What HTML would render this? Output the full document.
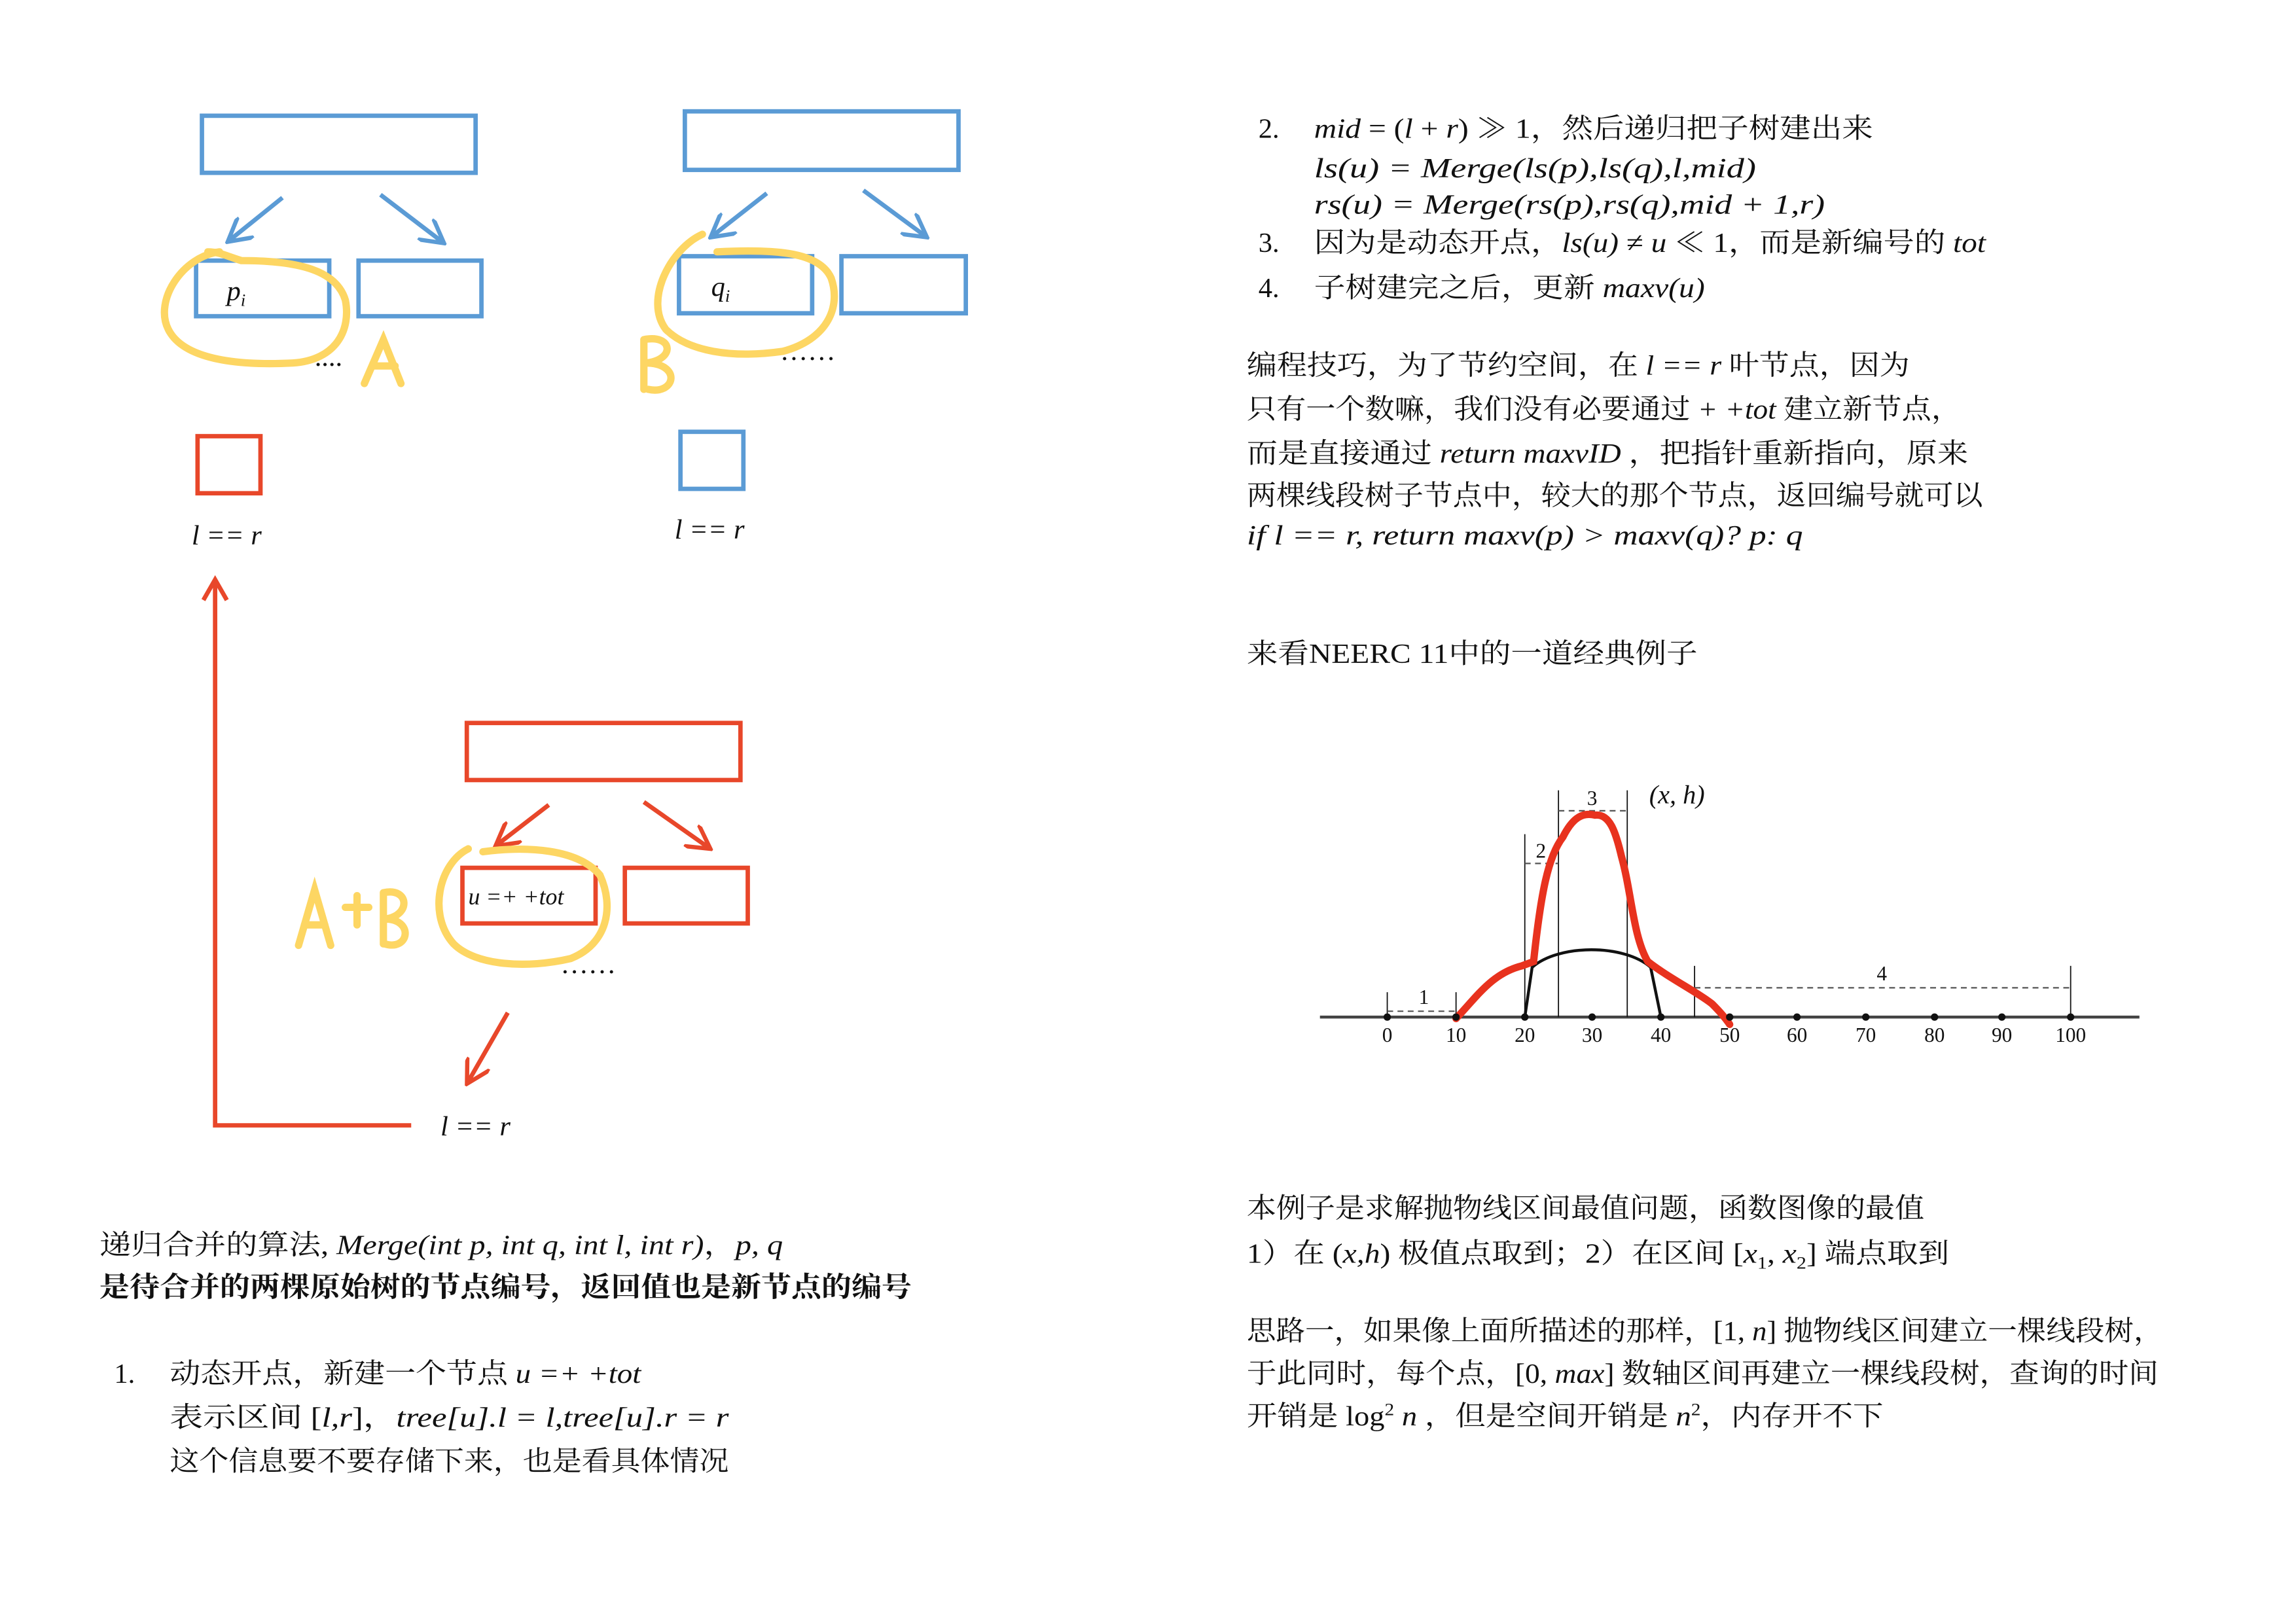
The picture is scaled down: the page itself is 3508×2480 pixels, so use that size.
<!DOCTYPE html>
<html><head><meta charset="utf-8">
<style>
html,body{margin:0;padding:0;background:#fff;}
svg{display:block;}
text{font-family:"Liberation Serif","Noto Serif CJK SC",serif;fill:#111;}
.t{font-size:19px;}
.i{font-style:italic;font-weight:normal;}
.b{font-weight:bold;}
</style></head>
<body>
<svg width="3508" height="2480" viewBox="0 0 1569 1109" xmlns="http://www.w3.org/2000/svg">
<rect width="1569" height="1109" fill="#fff"/>
<defs>
<marker id="ab" viewBox="0 0 10 10" refX="8" refY="5" markerWidth="6" markerHeight="6" orient="auto"><path d="M0,0 L9,5 L0,10" fill="none" stroke="#5b9bd5" stroke-width="1.6"/></marker>
<marker id="ar" viewBox="0 0 10 10" refX="8" refY="5" markerWidth="6" markerHeight="6" orient="auto"><path d="M0,0 L9,5 L0,10" fill="none" stroke="#e8472a" stroke-width="1.6"/></marker>
</defs>
<g fill="none" stroke="#5b9bd5" stroke-width="3">
<rect x="138" y="79" width="187" height="39"/>
<rect x="134" y="178" width="91" height="38"/>
<rect x="245" y="178" width="84" height="38"/>
<line x1="193" y1="135" x2="157" y2="164" marker-end="url(#ab)"/>
<line x1="260" y1="133" x2="302" y2="165" marker-end="url(#ab)"/>
<rect x="468" y="76" width="187" height="40"/>
<rect x="464" y="175" width="91" height="39"/>
<rect x="575" y="175" width="85" height="39"/>
<line x1="524" y1="132" x2="487" y2="161" marker-end="url(#ab)"/>
<line x1="590" y1="130" x2="632" y2="161" marker-end="url(#ab)"/>
<rect x="465" y="295" width="43" height="39"/>
</g>
<g fill="none" stroke="#e8472a" stroke-width="3">
<rect x="135" y="298" width="43" height="39"/>
<rect x="319" y="494" width="187" height="39"/>
<rect x="316" y="593" width="91" height="38"/>
<rect x="427" y="593" width="84" height="38"/>
<line x1="375" y1="550" x2="340" y2="577" marker-end="url(#ar)"/>
<line x1="440" y1="548" x2="484" y2="579" marker-end="url(#ar)"/>
<line x1="347" y1="692" x2="320" y2="739" marker-end="url(#ar)"/>
<polyline points="281,769 147,769 147,398"/>
<polyline points="139,410 147,396 155,410"/>
</g>
<g fill="none" stroke="#fdd663" stroke-width="5" stroke-linecap="round">
<path d="M150,172 C125,175 105,205 115,225 C125,245 160,250 200,248 C230,246 240,225 236,205 C230,185 205,178 165,178 C155,175 150,172 142,172"/>
<path d="M480,160 C458,170 440,205 455,225 C470,240 500,245 535,240 C565,232 575,210 568,190 C560,172 530,170 490,172"/>
<path d="M320,580 C300,590 292,625 310,645 C325,660 360,662 390,655 C415,645 420,620 410,598 C395,580 360,578 330,582"/>
<path d="M249,262 L262,232 L274,262 M255,250 L270,250"/>
<path d="M440,232 L440,266 M440,232 C460,228 462,246 441,248 C466,248 462,270 443,266"/>
<path d="M204,646 L215,608 L226,646 M208,632 L222,632 M236,620 L252,620 M244,612 L244,632 M262,610 L262,645 M262,610 C280,606 281,626 263,628 C283,628 280,650 263,645"/>
</g>
<text x="155" y="205" class="t i">p<tspan font-size="12" dy="4">i</tspan></text>
<text x="486" y="202" class="t i">q<tspan font-size="12" dy="4">i</tspan></text>
<text x="215" y="250" class="t">....</text>
<text x="533" y="246" class="t">……</text>
<text x="383" y="665" class="t">……</text>
<text x="320" y="618" font-size="16" class="i">u =+ +tot</text>
<text x="131" y="372" class="t i">l == r</text>
<text x="461" y="368" class="t i">l == r</text>
<text x="301" y="776" class="t i">l == r</text>

<text x="68" y="857" class="t" textLength="467" lengthAdjust="spacingAndGlyphs">递归合并的算法, <tspan class="i">Merge(int p, int q, int l, int r)</tspan>，<tspan class="i">p, q</tspan></text>
<text x="68" y="886" class="t b" textLength="555" lengthAdjust="spacingAndGlyphs">是待合并的两棵原始树的节点编号，返回值也是新节点的编号</text>
<text x="78" y="945" class="t">1.</text>
<text x="116" y="945" class="t" textLength="322" lengthAdjust="spacingAndGlyphs">动态开点，新建一个节点 <tspan class="i">u =+ +tot</tspan></text>
<text x="116" y="975" class="t" textLength="382" lengthAdjust="spacingAndGlyphs">表示区间 [<tspan class="i">l,r</tspan>]，<tspan class="i">tree[u].l = l,tree[u].r = r</tspan></text>
<text x="116" y="1005" class="t" textLength="382" lengthAdjust="spacingAndGlyphs">这个信息要不要存储下来，也是看具体情况</text>

<text x="860" y="94" class="t">2.</text>
<text x="898" y="94" class="t" textLength="382" lengthAdjust="spacingAndGlyphs"><tspan class="i">mid</tspan> = (<tspan class="i">l</tspan> + <tspan class="i">r</tspan>) ≫ 1，然后递归把子树建出来</text>
<text x="898" y="121" class="t i" textLength="302" lengthAdjust="spacingAndGlyphs">ls(u) = Merge(ls(p),ls(q),l,mid)</text>
<text x="898" y="146" class="t i" textLength="349" lengthAdjust="spacingAndGlyphs">rs(u) = Merge(rs(p),rs(q),mid + 1,r)</text>
<text x="860" y="172" class="t">3.</text>
<text x="898" y="172" class="t" textLength="459" lengthAdjust="spacingAndGlyphs">因为是动态开点，<tspan class="i">ls(u)</tspan> ≠ <tspan class="i">u</tspan> ≪ 1，而是新编号的 <tspan class="i">tot</tspan></text>
<text x="860" y="203" class="t">4.</text>
<text x="898" y="203" class="t" textLength="267" lengthAdjust="spacingAndGlyphs">子树建完之后，更新 <tspan class="i">maxv(u)</tspan></text>

<text x="852" y="256" class="t" textLength="453" lengthAdjust="spacingAndGlyphs">编程技巧，为了节约空间，在 <tspan class="i">l == r</tspan> 叶节点，因为</text>
<text x="852" y="286" class="t" textLength="488" lengthAdjust="spacingAndGlyphs">只有一个数嘛，我们没有必要通过 <tspan class="i">+ +tot</tspan> 建立新节点，</text>
<text x="852" y="316" class="t" textLength="493" lengthAdjust="spacingAndGlyphs">而是直接通过 <tspan class="i">return maxvID</tspan> ，把指针重新指向，原来</text>
<text x="852" y="345" class="t" textLength="503" lengthAdjust="spacingAndGlyphs">两棵线段树子节点中，较大的那个节点，返回编号就可以</text>
<text x="852" y="372" class="t i" textLength="380" lengthAdjust="spacingAndGlyphs">if l == r, return maxv(p) &gt; maxv(q)? p: q</text>
<text x="852" y="453" class="t" textLength="308" lengthAdjust="spacingAndGlyphs">来看NEERC 11中的一道经典例子</text>

<g stroke="#111" fill="none">
<line x1="902" y1="695" x2="1462" y2="695" stroke-width="2" stroke="#444"/>
<g stroke-width="0.8">
<line x1="948" y1="678" x2="948" y2="695"/>
<line x1="995" y1="678" x2="995" y2="695"/>
<line x1="1042" y1="570" x2="1042" y2="695"/>
<line x1="1065" y1="540" x2="1065" y2="695"/>
<line x1="1112" y1="540" x2="1112" y2="695"/>
<line x1="1158" y1="660" x2="1158" y2="695"/>
<line x1="1415" y1="660" x2="1415" y2="695"/>
</g>
<g stroke-width="1" stroke-dasharray="4,3" stroke="#555">
<line x1="948" y1="691" x2="995" y2="691"/>
<line x1="1042" y1="590" x2="1065" y2="590"/>
<line x1="1065" y1="554" x2="1112" y2="554"/>
<line x1="1158" y1="675" x2="1415" y2="675"/>
</g>
<path d="M1042,695 L1047,661 C1065,645 1110,645 1128,661 L1135,695" stroke-width="2"/>
<path d="M995,696 C1010,680 1020,665 1040,660 L1048,657 C1053,610 1058,585 1068,572 C1075,558 1082,555 1090,557 C1100,556 1104,568 1108,585 C1115,610 1116,640 1126,657 C1140,668 1160,678 1170,686 C1176,692 1180,697 1182,700" stroke="#e8321e" stroke-width="5" stroke-linecap="round"/>
</g>
<g fill="#111">
<circle cx="948" cy="695" r="2.5"/><circle cx="995" cy="695" r="2.5"/><circle cx="1042" cy="695" r="2.5"/><circle cx="1088" cy="695" r="2.5"/><circle cx="1135" cy="695" r="2.5"/><circle cx="1182" cy="695" r="2.5"/><circle cx="1228" cy="695" r="2.5"/><circle cx="1275" cy="695" r="2.5"/><circle cx="1322" cy="695" r="2.5"/><circle cx="1368" cy="695" r="2.5"/><circle cx="1415" cy="695" r="2.5"/>
</g>
<g font-size="14" text-anchor="middle">
<text x="948" y="712">0</text><text x="995" y="712">10</text><text x="1042" y="712">20</text><text x="1088" y="712">30</text><text x="1135" y="712">40</text><text x="1182" y="712">50</text><text x="1228" y="712">60</text><text x="1275" y="712">70</text><text x="1322" y="712">80</text><text x="1368" y="712">90</text><text x="1415" y="712">100</text>
<text x="973" y="686">1</text><text x="1053" y="586">2</text><text x="1088" y="550">3</text><text x="1286" y="670">4</text>
</g>
<text x="1127" y="549" font-size="18" class="i">(x, h)</text>

<text x="852" y="832" class="t" textLength="463" lengthAdjust="spacingAndGlyphs">本例子是求解抛物线区间最值问题，函数图像的最值</text>
<text x="852" y="863" class="t" textLength="480" lengthAdjust="spacingAndGlyphs">1）在 (<tspan class="i">x,h</tspan>) 极值点取到；2）在区间 [<tspan class="i">x</tspan><tspan font-size="12" dy="4">1</tspan><tspan dy="-4">, </tspan><tspan class="i">x</tspan><tspan font-size="12" dy="4">2</tspan><tspan dy="-4">]</tspan> 端点取到</text>
<text x="852" y="916" class="t" textLength="626" lengthAdjust="spacingAndGlyphs">思路一，如果像上面所描述的那样，[1, <tspan class="i">n</tspan>] 抛物线区间建立一棵线段树，</text>
<text x="852" y="945" class="t" textLength="623" lengthAdjust="spacingAndGlyphs">于此同时，每个点，[0, <tspan class="i">max</tspan>] 数轴区间再建立一棵线段树，查询的时间</text>
<text x="852" y="974" class="t" textLength="435" lengthAdjust="spacingAndGlyphs">开销是 log<tspan font-size="12" dy="-7">2</tspan><tspan dy="7"> </tspan><tspan class="i">n</tspan> ，但是空间开销是 <tspan class="i">n</tspan><tspan font-size="12" dy="-7">2</tspan><tspan dy="7">，内存开不下</tspan></text>
</svg>
</body></html>
